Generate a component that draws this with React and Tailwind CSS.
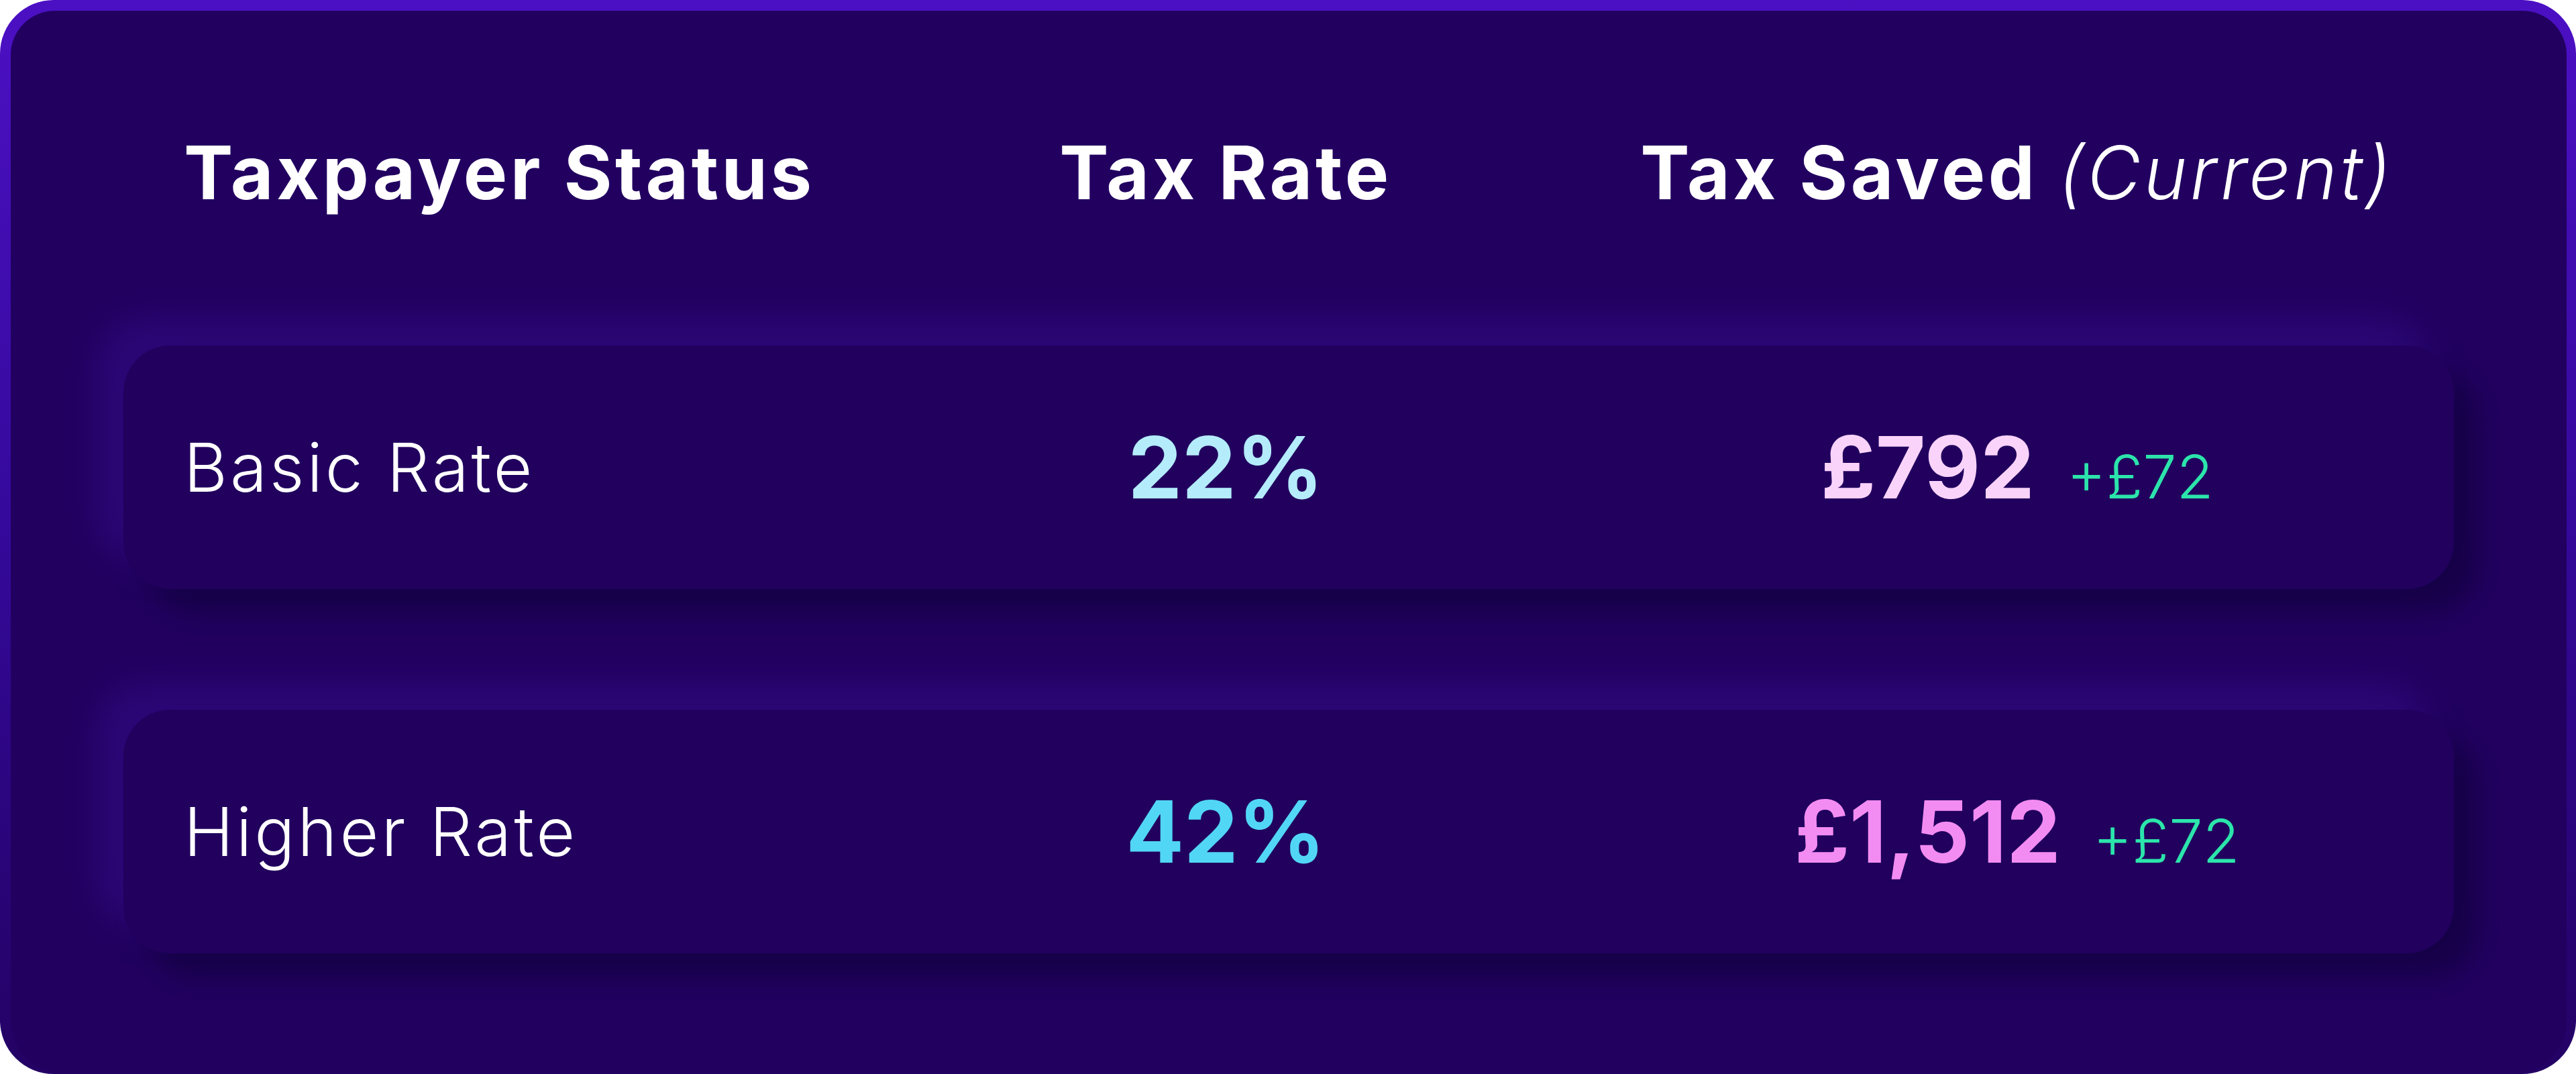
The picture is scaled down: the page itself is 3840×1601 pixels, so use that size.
const rows = [
  { status: 'Basic Rate', rate: '22%', rateColor: 'text-[#b4ecfb]', saved: '£792', savedColor: 'text-[#fad3fa]', extra: '+£72' },
  { status: 'Higher Rate', rate: '42%', rateColor: 'text-[#52d6f6]', saved: '£1,512', savedColor: 'text-[#f38cf2]', extra: '+£72' },
]

export default function App() {
  return (
    <div className="w-[3840px] h-[1601px] bg-white font-[Inter,sans-serif]">
      <div className="h-full rounded-[80px] bg-gradient-to-b from-[#4c10c4] via-[#34099a] to-[#230264] pt-[16px] pl-[16px] pr-[14px]">
        <div className="h-full rounded-t-[66px] rounded-b-[80px] bg-[#220060] px-[168px] pt-[107px]">
          {/* Header */}
          <div className="grid grid-cols-[1fr_1180px_1180px] items-center h-[268px] pl-[90px] pr-[61px] text-white text-[110px] font-bold leading-none tracking-[4.5px]">
            <div>Taxpayer Status</div>
            <div className="text-center">Tax Rate</div>
            <div className="text-center">
              Tax Saved <span className="font-light italic">(Current)</span>
            </div>
          </div>

          {/* Rows */}
          <div className="mt-[124px] flex flex-col gap-[180px]">
            {rows.map((row) => (
              <div
                key={row.status}
                className="grid grid-cols-[1fr_1180px_1180px] items-center h-[363px] pl-[90px] pr-[61px] rounded-[70px] bg-[#21005e] shadow-[-40px_-40px_50px_rgba(52,14,140,0.5),36px_36px_40px_rgba(18,0,62,0.7)]"
              >
                <div className="text-white text-[100px] font-[350] leading-none tracking-[4px]">{row.status}</div>
                <div className={`text-center text-[128px] font-bold leading-none ${row.rateColor}`}>{row.rate}</div>
                <div className="flex items-baseline justify-center gap-[48px] leading-none">
                  <span className={`text-[128px] font-bold ${row.savedColor}`}>{row.saved}</span>
                  <span className="text-[90px] font-[350] text-[#2ce5ab]">{row.extra}</span>
                </div>
              </div>
            ))}
          </div>
        </div>
      </div>
    </div>
  )
}
